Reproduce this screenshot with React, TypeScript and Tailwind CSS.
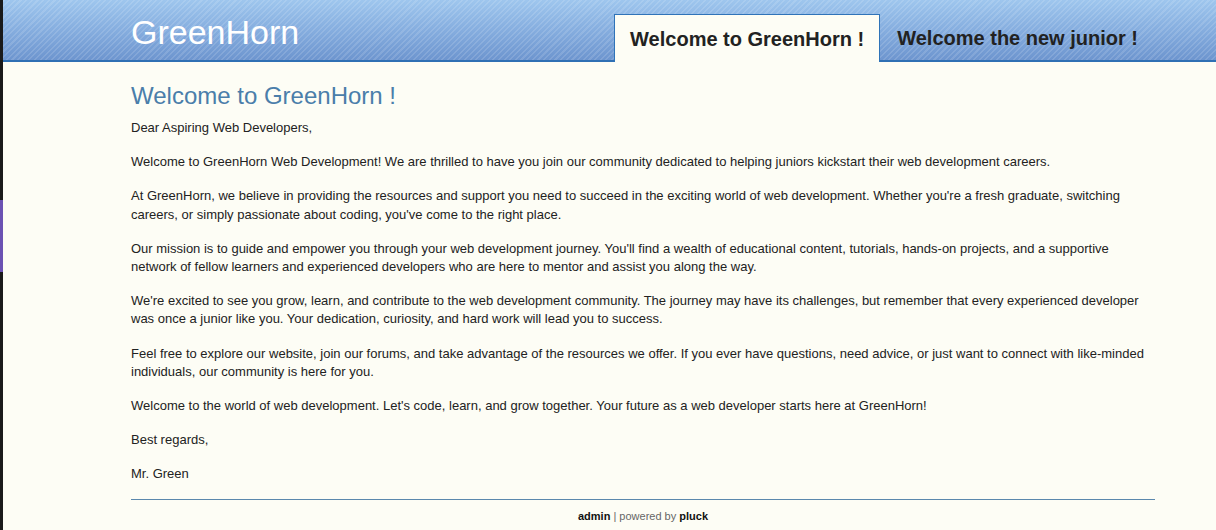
import React from "react"

const paragraphs = [
  "Dear Aspiring Web Developers,",
  "Welcome to GreenHorn Web Development! We are thrilled to have you join our community dedicated to helping juniors kickstart their web development careers.",
  "At GreenHorn, we believe in providing the resources and support you need to succeed in the exciting world of web development. Whether you're a fresh graduate, switching careers, or simply passionate about coding, you've come to the right place.",
  "Our mission is to guide and empower you through your web development journey. You'll find a wealth of educational content, tutorials, hands-on projects, and a supportive network of fellow learners and experienced developers who are here to mentor and assist you along the way.",
  "We're excited to see you grow, learn, and contribute to the web development community. The journey may have its challenges, but remember that every experienced developer was once a junior like you. Your dedication, curiosity, and hard work will lead you to success.",
  "Feel free to explore our website, join our forums, and take advantage of the resources we offer. If you ever have questions, need advice, or just want to connect with like-minded individuals, our community is here for you.",
  "Welcome to the world of web development. Let's code, learn, and grow together. Your future as a web developer starts here at GreenHorn!",
  "Best regards,",
  "Mr. Green",
]

export default function App() {
  return (
    <div className="flex min-h-[530px] font-['Liberation_Sans',Arial,sans-serif] bg-[#fdfdf5]">
      {/* window edge on the left */}
      <div className="w-[3px] shrink-0 bg-[#1a1a1a] flex flex-col">
        <div className="h-[200px]" />
        <div className="h-[72px] bg-[#6b52b3]" />
      </div>

      <div className="flex-1 flex flex-col">
        {/* Header */}
        <header className="h-[62px] border-b-2 border-[#2f70b4] bg-[repeating-linear-gradient(135deg,rgba(255,255,255,0.13)_0px,rgba(255,255,255,0.13)_1.5px,transparent_1.5px,transparent_4px),linear-gradient(to_bottom,#9ec6ee,#6d95cf)]">
          <div className="ml-[128px] w-[1024px] h-full flex justify-between">
            <div className="pt-[12px] text-[34px] leading-[40px] text-white">GreenHorn</div>
            <nav className="flex items-end gap-[2px] self-end -mb-[2px]">
              <div className="h-[48px] px-[15px] flex items-center bg-[#fdfdf5] border border-b-0 border-[#2f73b8] text-[20px] font-bold text-[#222]">
                Welcome to GreenHorn !
              </div>
              <div className="h-[48px] pl-[15px] pr-[17px] flex items-center text-[20px] font-bold text-[#222]">
                Welcome the new junior !
              </div>
            </nav>
          </div>
        </header>

        {/* Content */}
        <main className="ml-[128px] w-[1024px] pt-[20px]">
          <h1 className="text-[24px] leading-[28px] text-[#4a7eaa] mb-[9px]">Welcome to GreenHorn !</h1>
          <div className="flex flex-col gap-[16px] text-[13px] leading-[1.4] text-[#222]">
            {paragraphs.map((p, i) => (
              <p key={i}>{p}</p>
            ))}
          </div>
          <div className="mt-[16px] border-t border-[#5b88ad]" />
          <footer className="pt-[10px] text-center text-[11px] leading-[13px] text-[#666]">
            <span className="font-bold text-[#111]">admin</span> | powered by{" "}
            <span className="font-bold text-[#111]">pluck</span>
          </footer>
        </main>
      </div>
    </div>
  )
}
